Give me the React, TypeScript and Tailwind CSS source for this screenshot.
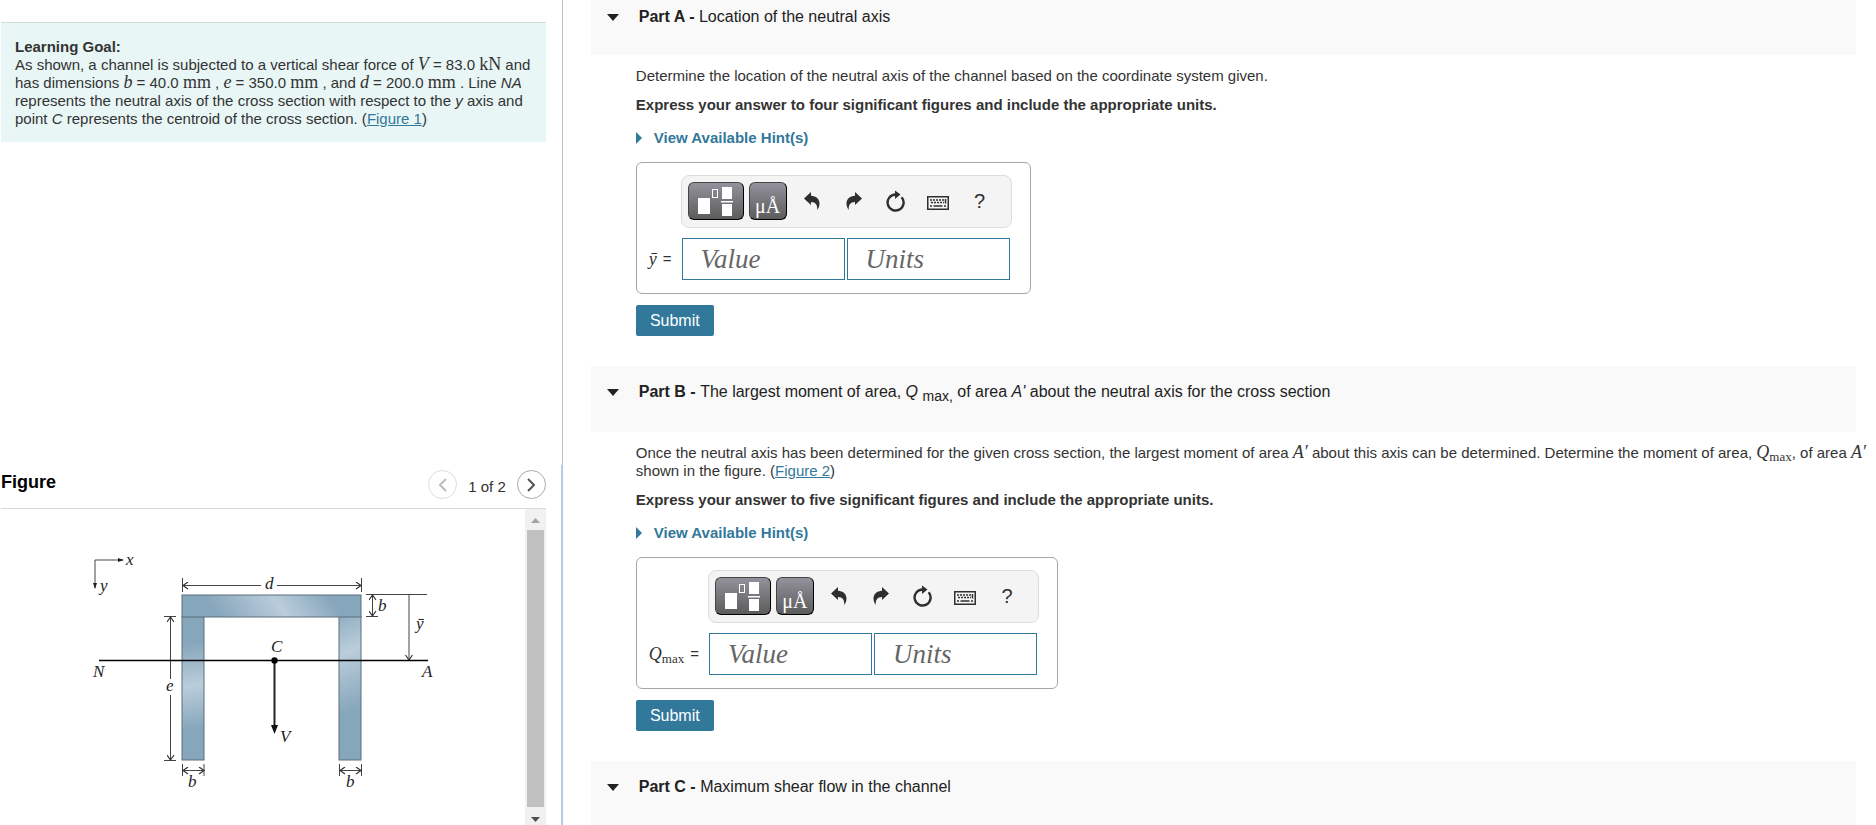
import type { ReactNode } from "react";

function MathText({ children, italic }: { children: ReactNode; italic?: boolean }) {
  return (
    <span
      className={
        italic
          ? "inline-block font-['Liberation_Serif',serif] text-[18px] leading-4 italic"
          : "inline-block font-['Liberation_Serif',serif] text-[18px] leading-4"
      }
    >
      {children}
    </span>
  );
}

function QMax() {
  return (
    <MathText>
      <i>Q</i>
      <sub className="text-[13px]">max</sub>
    </MathText>
  );
}

function Toolbar() {
  const plain = "flex h-[38px] w-[42px] items-center justify-center text-[#2f2f2f]";
  const dark =
    "flex h-[38px] items-center justify-center rounded-md border border-black border-t-[#444] border-l-[#444] bg-linear-to-b from-[#94929c] to-[#5c5c5c] text-white";

  return (
    <div className="flex h-[53px] w-[331px] items-start rounded-lg border border-[#dcdcdc] bg-[#f4f4f4] px-1.5 pt-1.5">
      <button type="button" aria-label="Templates" className={`${dark} w-[56px]`}>
        <svg width="36" height="30" viewBox="0 0 36 30" fill="#fff">
          <rect x="0" y="12" width="12" height="16" />
          <rect x="14.5" y="3.5" width="5" height="8" fill="none" stroke="#fff" />
          <rect x="24" y="1" width="10" height="12" />
          <rect x="23" y="15" width="12" height="1.5" />
          <rect x="24" y="18" width="10" height="12" />
        </svg>
      </button>
      <button
        type="button"
        aria-label="Symbols"
        className={`${dark} ml-[5px] w-[38px] pt-2.5 font-['Liberation_Serif',serif] text-xl leading-none`}
      >
        μÅ
      </button>
      <button type="button" aria-label="Undo" className={`${plain} ml-1`}>
        <svg width="16" height="18" viewBox="0 0 16 18" fill="currentColor">
          <path d="M0 6.5 7 0v3.8C12 4 15.5 7 15.5 11.5c0 2.5-.8 4.5-2.3 6.5.5-5-1.5-8-6.2-8V13z" />
        </svg>
      </button>
      <button type="button" aria-label="Redo" className={plain}>
        <svg width="16" height="18" viewBox="0 0 16 18" fill="currentColor">
          <path d="M16 6.5 9 0v3.8C4 4 .5 7 .5 11.5c0 2.5.8 4.5 2.3 6.5-.5-5 1.5-8 6.2-8V13z" />
        </svg>
      </button>
      <button type="button" aria-label="Reset" className={plain}>
        <svg width="20" height="22" viewBox="0 0 20 22">
          <path d="M15.6 7.2A8 8 0 1 1 9.5 4.5" fill="none" stroke="currentColor" strokeWidth="2.4" />
          <path d="M9 .5l5.5 4L9 9z" fill="currentColor" />
        </svg>
      </button>
      <button type="button" aria-label="Keyboard" className={plain}>
        <svg width="22" height="14" viewBox="0 0 22 14" className="mt-1">
          <rect x=".75" y=".75" width="20.5" height="12.5" fill="none" stroke="currentColor" strokeWidth="1.5" />
          <path d="M3 4h14M4 6.5h13" stroke="currentColor" strokeWidth="1.5" strokeDasharray="2 1" />
          <path d="M3 10h2M6.5 10h9M17 10h2M18.5 3v4.5" stroke="currentColor" strokeWidth="1.5" />
        </svg>
      </button>
      <button type="button" aria-label="Help" className={`${plain} text-xl`}>
        ?
      </button>
    </div>
  );
}

function AnswerBox({ id, label }: { id: string; label: ReactNode }) {
  const field =
    "h-[42px] w-[163px] border border-[#31789b] bg-white px-[18px] font-['Liberation_Serif',serif] text-[27px] italic placeholder:text-[#666]";

  return (
    <form>
      <div className="grid w-fit grid-cols-[auto_auto] gap-y-2.5 rounded-md border border-[#a6a6a6] pt-3 pr-[18px] pb-[13px] pl-3">
        <div />
        <Toolbar />
        <label htmlFor={`${id}-value`} className="flex items-center gap-1.5 pr-[9px]">
          {label}
          <span>=</span>
        </label>
        <div className="flex gap-0.5 pl-px">
          <input id={`${id}-value`} type="text" placeholder="Value" className={field} />
          <input type="text" placeholder="Units" aria-label="Units" className={field} />
        </div>
      </div>
      <button type="submit" className="mt-[11px] h-[31px] w-[78px] rounded-xs bg-[#31789b] text-base text-white">
        Submit
      </button>
    </form>
  );
}

function PartHeader({ name, children }: { name: string; children: ReactNode }) {
  return (
    <h2 className="mr-5 flex items-start bg-[#f9f9f9] pt-[14px] pb-[26px] text-base leading-6 text-[#222]">
      <button type="button" aria-label={`Toggle ${name}`} className="flex h-6 w-12 items-center pl-4">
        <svg width="12" height="7" viewBox="0 0 12 7" fill="currentColor">
          <path d="M0 0h12L6 7z" />
        </svg>
      </button>
      <span>
        <b>{name} - </b>
        {children}
      </span>
    </h2>
  );
}

function Hints() {
  return (
    <button type="button" className="flex items-center gap-3 py-1 font-bold text-[#31789b]">
      <svg width="6" height="12" viewBox="0 0 6 12" fill="currentColor">
        <path d="M0 0l6 6-6 6z" />
      </svg>
      View Available Hint(s)
    </button>
  );
}

function ChannelFigure() {
  const steel = "#86a6bb";
  const shine = "#bacddb";

  return (
    <svg
      width="370"
      height="260"
      viewBox="0 0 370 260"
      role="img"
      aria-label="Channel cross section"
      className="font-['Liberation_Serif',serif] text-[17px] italic"
    >
      <defs>
        <linearGradient id="top" gradientUnits="userSpaceOnUse" x1="150" y1="95" x2="237" y2="37">
          <stop offset="0" stopColor={steel} />
          <stop offset="0.55" stopColor={shine} />
          <stop offset="1" stopColor={steel} />
        </linearGradient>
        <linearGradient id="left" gradientUnits="userSpaceOnUse" x1="108" y1="103" x2="121" y2="188">
          <stop offset="0" stopColor={steel} />
          <stop offset="0.5" stopColor={shine} />
          <stop offset="1" stopColor={steel} />
        </linearGradient>
        <linearGradient id="right" gradientUnits="userSpaceOnUse" x1="253" y1="66" x2="290" y2="165">
          <stop offset="0" stopColor={steel} />
          <stop offset="0.45" stopColor={shine} />
          <stop offset="1" stopColor={steel} />
        </linearGradient>
        <marker id="open" viewBox="0 0 8 8" refX="6.5" refY="4" markerWidth="8" markerHeight="8" orient="auto-start-reverse">
          <path d="M1.5 .5 6.5 4l-5 3.5" fill="none" stroke="#333" strokeWidth="1.2" />
        </marker>
        <marker id="solid" viewBox="0 0 6 6" refX="5" refY="3" markerWidth="6" markerHeight="6" orient="auto">
          <path d="M0 1l6 2-6 2z" fill="#222" />
        </marker>
      </defs>

      <g stroke="#5d6f7b">
        <rect x="102" y="76" width="22" height="144" fill="url(#left)" />
        <rect x="259" y="76" width="22" height="144" fill="url(#right)" />
        <rect x="102" y="55" width="179" height="22" fill="url(#top)" />
      </g>

      <g stroke="#444" fill="none">
        <path d="M15 20h28" markerEnd="url(#solid)" />
        <path d="M15 20v28" markerEnd="url(#solid)" />
        <path d="M102.5 38v14M281.5 38v14M286 54.5h61M286 76.5h12M84 76.5h12M84 220.5h12" />
        <path d="M102.5 224v12M124 224v12M259.5 224v12M281.5 224v12" />
        <path d="M181 45.5h-78" markerEnd="url(#open)" />
        <path d="M197 45.5h84" markerEnd="url(#open)" />
        <path d="M90.5 139V77" markerEnd="url(#open)" />
        <path d="M90.5 155v65" markerEnd="url(#open)" />
        <path d="M292.5 55v21" markerStart="url(#open)" markerEnd="url(#open)" />
        <path d="M329 55v65" markerEnd="url(#open)" />
        <path d="M103 230.5h21" markerStart="url(#open)" markerEnd="url(#open)" />
        <path d="M260 230.5h21" markerStart="url(#open)" markerEnd="url(#open)" />
      </g>

      <path d="M19 120.5h329" stroke="#000" strokeWidth="1.5" />
      <path d="M194.5 120v67" stroke="#222" strokeWidth="2" />
      <path d="M191 185h7l-3.5 9z" fill="#111" />
      <circle cx="194.5" cy="120.5" r="3.2" fill="#000" />

      <g fill="#222">
        <text x="46" y="25">x</text>
        <text x="20" y="51">y</text>
        <text x="185" y="49">d</text>
        <text x="298" y="71">b</text>
        <text x="336" y="89">ȳ</text>
        <text x="191" y="112">C</text>
        <text x="13" y="137">N</text>
        <text x="342" y="137">A</text>
        <text x="86" y="151">e</text>
        <text x="200" y="202">V</text>
        <text x="108" y="247">b</text>
        <text x="266" y="247">b</text>
      </g>
    </svg>
  );
}

function FigurePanel() {
  return (
    <section className="flex h-[360px] flex-col border-r-2 border-[#b8cbe6] pr-[15px] pl-px">
      <header className="flex h-[44px] items-start justify-between border-b border-[#d9d9d9]">
        <h2 className="pt-[3px] text-lg font-bold text-black">Figure</h2>
        <div className="flex items-center pt-[5px]">
          <button
            type="button"
            aria-label="Previous figure"
            disabled
            className="flex size-[29px] items-center justify-center rounded-full border border-[#ddd] text-[#bbb]"
          >
            <svg width="8" height="14" viewBox="0 0 8 14" fill="none" stroke="currentColor" strokeWidth="2">
              <path d="M7 1 1 7l6 6" />
            </svg>
          </button>
          <span className="px-[11px] pt-1">1 of 2</span>
          <button
            type="button"
            aria-label="Next figure"
            className="flex size-[29px] items-center justify-center rounded-full border border-[#aaa] text-[#555]"
          >
            <svg width="8" height="14" viewBox="0 0 8 14" fill="none" stroke="currentColor" strokeWidth="2">
              <path d="m1 1 6 6-6 6" />
            </svg>
          </button>
        </div>
      </header>
      <div className="flex min-h-0 flex-1 justify-between">
        <div className="pt-[31px] pl-[79px]">
          <ChannelFigure />
        </div>
        <div className="flex w-[21px] flex-col items-center justify-between bg-[#f1f1f1] pt-[9px] pb-[3px]">
          <svg width="9" height="5" viewBox="0 0 9 5" fill="#a3a3a3">
            <path d="M0 5h9L4.5 0z" />
          </svg>
          <div className="mt-[7px] mb-2.5 w-[17px] flex-1 bg-[#c1c1c1]" />
          <svg width="9" height="5" viewBox="0 0 9 5" fill="#505050">
            <path d="M0 0h9L4.5 5z" />
          </svg>
        </div>
      </div>
    </section>
  );
}

const link = "text-[#31789b] underline";

export default function App() {
  return (
    <div className="flex h-screen overflow-hidden bg-white font-['Liberation_Sans',Arial,sans-serif] text-[15px] leading-[18px] text-[#333]">
      <aside className="flex w-[30%] shrink-0 flex-col">
        <div className="flex-1 border-r border-[#b9c3ce] pt-[22px] pr-4 pl-px">
          <div className="border-t border-[#d9d9d9] bg-[#e8f6f6] px-3.5 pt-[15px] pb-3.5">
            <b>Learning Goal:</b>
            <p>
              As shown, a channel is subjected to a vertical shear force of <MathText italic>V</MathText> = 83.0{" "}
              <MathText>kN</MathText> and has dimensions <MathText italic>b</MathText> = 40.0 <MathText>mm</MathText> ,{" "}
              <MathText italic>e</MathText> = 350.0 <MathText>mm</MathText> , and <MathText italic>d</MathText> = 200.0{" "}
              <MathText>mm</MathText> . Line <i>NA</i> represents the neutral axis of the cross section with respect to
              the <i>y</i> axis and point <i>C</i> represents the centroid of the cross section. (
              <a href="#figure1" className={link}>
                Figure 1
              </a>
              )
            </p>
          </div>
        </div>
        <FigurePanel />
      </aside>

      <main className="-mt-[9px] min-w-0 flex-1 pl-7">
        <PartHeader name="Part A">Location of the neutral axis</PartHeader>
        <div className="space-y-[11px] pt-3 pb-[30px] pl-[45px]">
          <p>Determine the location of the neutral axis of the channel based on the coordinate system given.</p>
          <p className="font-bold">Express your answer to four significant figures and include the appropriate units.</p>
          <Hints />
          <AnswerBox id="part-a" label={<MathText italic>ȳ</MathText>} />
        </div>

        <PartHeader name="Part B">
          The largest moment of area, <i>Q</i> <span className="align-sub text-sm leading-5">max,</span> of area{" "}
          <i>A'</i> about the neutral axis for the cross section
        </PartHeader>
        <div className="space-y-[11px] pt-3 pb-[30px] pl-[45px]">
          <p>
            Once the neutral axis has been determined for the given cross section, the largest moment of area{" "}
            <MathText italic>A′</MathText> about this axis can be determined. Determine the moment of area, <QMax />, of
            area <MathText italic>A′</MathText> shown in the figure. (
            <a href="#figure2" className={link}>
              Figure 2
            </a>
            )
          </p>
          <p className="font-bold">Express your answer to five significant figures and include the appropriate units.</p>
          <Hints />
          <AnswerBox id="part-b" label={<QMax />} />
        </div>

        <PartHeader name="Part C">Maximum shear flow in the channel</PartHeader>
      </main>
    </div>
  );
}
